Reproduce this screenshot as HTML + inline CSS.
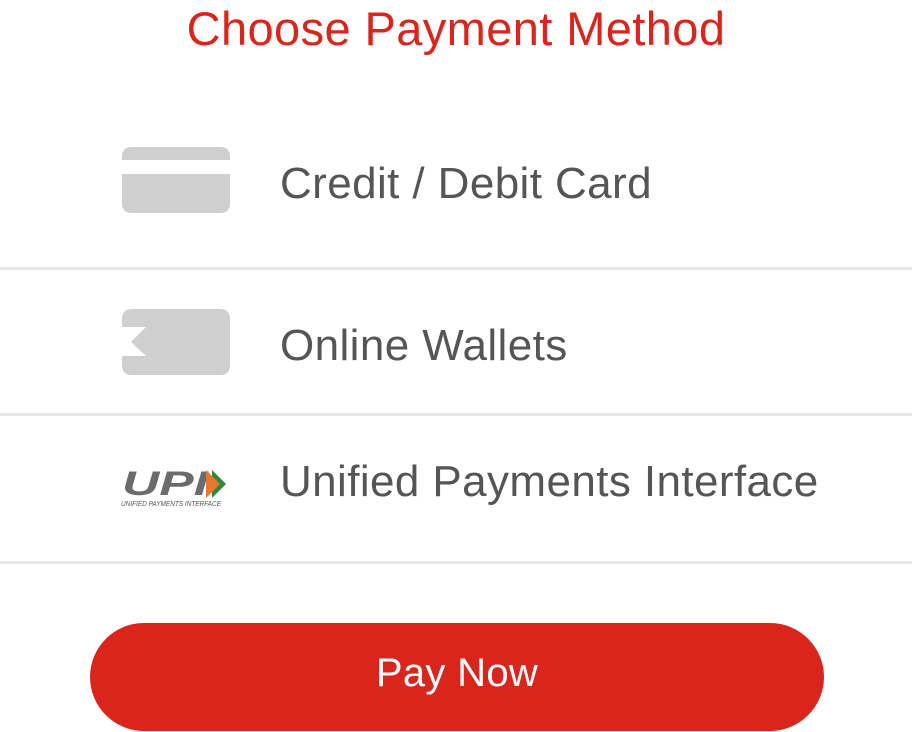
<!DOCTYPE html>
<html><head><meta charset="utf-8"><style>
body{margin:0;width:912px;height:732px;background:#fff;position:relative;overflow:hidden;font-family:"Liberation Sans",sans-serif}
.t{position:absolute;white-space:nowrap}
.title{left:0;width:912px;text-align:center;top:1px;font-size:47px;letter-spacing:0.4px;color:#d9251c}
.lbl{left:280px;font-size:44px;letter-spacing:0.4px;color:#555}
.div{position:absolute;left:0;width:912px;height:3px;background:#e8e8e8}
.btn{position:absolute;left:90px;top:623px;width:734px;height:108px;border-radius:54px;background:#da251c;color:#fff;font-size:40px;letter-spacing:0.3px;text-align:center;line-height:100px}
</style></head><body>
<div class="t title">Choose Payment Method</div>
<svg style="position:absolute;left:122px;top:147px" width="108" height="66"><path d="M0 13V10Q0 0 10 0H98Q108 0 108 10V13Z" fill="#cfcfcf"/><path d="M0 27H108V56Q108 66 98 66H10Q0 66 0 56Z" fill="#cfcfcf"/></svg>
<div class="t lbl" style="top:159px">Credit / Debit Card</div>
<div class="div" style="top:267px"></div>
<svg style="position:absolute;left:122px;top:309px" width="108" height="66"><path d="M10 0H98Q108 0 108 10V56Q108 66 98 66H10Q0 66 0 56V47H24L9 33L24 18H0V10Q0 0 10 0Z" fill="#cfcfcf"/></svg>
<div class="t lbl" style="top:321px">Online Wallets</div>
<div class="div" style="top:413px"></div>
<svg style="position:absolute;left:120px;top:465px" width="110" height="45"><text x="2" y="30" font-family="Liberation Sans" font-style="italic" font-weight="bold" font-size="34" fill="#6b6b6b" textLength="86" lengthAdjust="spacingAndGlyphs">UPI</text><path d="M92 5L106 19L92 33Z" fill="#2e8b3a"/><path d="M86 5L100 19L86 33Z" fill="#e8772e"/><text x="1" y="41" font-family="Liberation Sans" font-style="italic" font-size="7" fill="#555" textLength="100" lengthAdjust="spacingAndGlyphs">UNIFIED PAYMENTS INTERFACE</text></svg>
<div class="t lbl" style="top:457px">Unified Payments Interface</div>
<div class="div" style="top:561px"></div>
<div class="btn">Pay Now</div>
</body></html>
